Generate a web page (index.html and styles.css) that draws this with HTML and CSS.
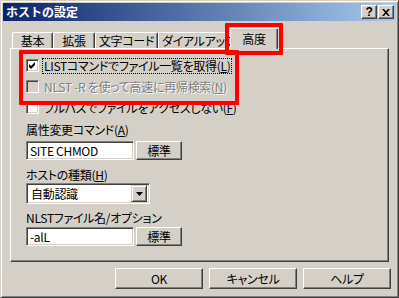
FILE: index.html
```html
<!DOCTYPE html>
<html lang="ja">
<head>
    <meta charset="UTF-8">
    <title>ホストの設定</title>
    <link rel="stylesheet" href="styles.css">
</head>
<body>
<div class="dialog">
    <div class="titlebar">
        <span class="title">ホストの設定</span>
        <div class="caption-btns">
            <span class="cap-btn help-btn">?</span>
            <span class="cap-btn">
                <svg width="8" height="7" viewBox="0 0 8 7"><path d="M0 0h2l2 2.2L6 0h2L5 3.5 8 7H6L4 4.8 2 7H0l3-3.5z" fill="#000"/></svg>
            </span>
        </div>
    </div>
    <div class="content">
        <div class="tabs">
            <div class="tab tab-basic">基本</div>
            <div class="tab tab-ext">拡張</div>
            <div class="tab tab-code">文字コード</div>
            <div class="tab tab-dial">ダイアルアップ</div>
            <div class="tab tab-adv active">高度</div>
        </div>
        <div class="panel">
            <div class="check-row">
                <span class="checkbox">
                    <svg width="11" height="11" viewBox="0 0 11 11"><polygon points="2,4 4,6 8,2 8,5 4,9 2,7" fill="#000"/></svg>
                </span>
                <span class="check-label focus">LISTコマンドでファイル一覧を取得(<u>L</u>)</span>
            </div>
            <div class="check-row">
                <span class="checkbox disabled"></span>
                <span class="check-label grayed">NLST -R を使って高速に再帰検索(<u>N</u>)</span>
            </div>
            <div class="check-row">
                <span class="checkbox"></span>
                <span class="check-label">フルパスでファイルをアクセスしない(<u>F</u>)</span>
            </div>

            <div class="field-label label-a">属性変更コマンド(<u>A</u>)</div>
            <div class="field-row">
                <div class="textbox">SITE CHMOD</div>
                <div class="button small">標準</div>
            </div>

            <div class="field-label label-h">ホストの種類(<u>H</u>)</div>
            <div class="combo">
                <span class="combo-text">自動認識</span>
                <span class="combo-btn">
                    <svg width="7" height="4" viewBox="0 0 7 4"><polygon points="0,0 7,0 3.5,4" fill="#000"/></svg>
                </span>
            </div>

            <div class="field-label label-n">NLSTファイル名/オプション</div>
            <div class="field-row row-n">
                <div class="textbox">-alL</div>
                <div class="button small">標準</div>
            </div>
        </div>
        <div class="buttons">
            <div class="button wide">OK</div>
            <div class="button wide">キャンセル</div>
            <div class="button wide">ヘルプ</div>
        </div>
    </div>

    <!-- 赤枠の注釈 -->
    <div class="mark mark-tab"></div>
    <div class="mark mark-list"></div>
</div>
</body>
</html>
```

FILE: styles.css
```css
* {
    margin: 0;
    padding: 0;
    box-sizing: border-box;
}

body {
    width: 399px;
    height: 298px;
    background: #d4d0c8;
    font-family: "Noto Sans CJK JP", "Liberation Sans", sans-serif;
    font-size: 12px;
    line-height: 14px;
    letter-spacing: -0.3px;
    font-feature-settings: "palt";
    color: #000;
    overflow: hidden;
}

.dialog {
    position: relative;
    width: 399px;
    height: 298px;
    padding: 2px;
    background: #d4d0c8;
    border: 1px solid;
    border-color: #d4d0c8 #404040 #404040 #d4d0c8;
    box-shadow: inset 1px 1px #fff, inset -1px -1px #808080;
}

.titlebar {
    height: 18px;
    display: flex;
    align-items: center;
    justify-content: space-between;
    padding-left: 3px;
    background: linear-gradient(to right, #0a246a, #a6caf0);
}

.title {
    color: #fff;
    font-weight: bold;
    font-size: 12px;
    letter-spacing: 0;
    font-feature-settings: normal;
}

.caption-btns {
    display: flex;
    gap: 1px;
    margin-right: 2px;
}

.cap-btn {
    width: 16px;
    height: 14px;
    display: flex;
    align-items: center;
    justify-content: center;
    background: #d4d0c8;
    border: 1px solid;
    border-color: #fff #404040 #404040 #fff;
    box-shadow: inset -1px -1px #808080;
}

.help-btn {
    font-family: "Liberation Sans", sans-serif;
    font-weight: bold;
    font-size: 12px;
}

.content {
    padding: 0 7px;
}

/* タブ */
.tabs {
    height: 20px;
    margin-top: 7px;
    padding-left: 2px;
    display: flex;
    align-items: flex-end;
}

.tab {
    height: 16px;
    padding-top: 1px;
    text-align: center;
    white-space: nowrap;
    background: #d4d0c8;
    border-top: 1px solid #fff;
    border-left: 1px solid #fff;
    border-right: 1px solid #404040;
    border-radius: 2px 2px 0 0;
    box-shadow: inset -1px 0 #808080;
}

.tab-basic { width: 41px; }
.tab-ext { width: 42px; }
.tab-code { width: 63px; }
.tab-dial {
    width: 74px;
    text-align: left;
    padding-left: 3px;
}

.tab.active {
    position: relative;
    z-index: 1;
    width: 48px;
    height: 21px;
    margin: 0 -2px -1px -2px;
    padding-top: 3px;
}

.panel {
    height: 214px;
    padding: 6px 0 0 15px;
    border: 1px solid;
    border-color: #fff #404040 #404040 #fff;
    box-shadow: inset -1px -1px #808080;
}

/* チェックボックス */
.check-row {
    height: 21px;
    display: flex;
    align-items: center;
}

.checkbox {
    width: 13px;
    height: 13px;
    flex: none;
    background: #fff;
    border: 1px solid;
    border-color: #808080 #fff #fff #808080;
    box-shadow: inset 1px 1px #404040, inset -1px -1px #d4d0c8;
}

.checkbox svg {
    display: block;
}

.checkbox.disabled {
    background: #d4d0c8;
}

.check-label {
    margin-left: 4px;
    padding: 0 1px;
}

.check-label.focus {
    outline: 1px dotted #000;
    outline-offset: 0;
}

.check-label.grayed {
    color: #808080;
    text-shadow: 1px 1px #fff;
}

/* 入力欄 */
.field-label {
    height: 14px;
}

.label-a { margin-top: 5px; }
.label-h { margin-top: 8px; }
.label-n { margin-top: 7px; }

.field-row {
    margin-top: 4px;
    display: flex;
    gap: 2px;
}

.row-n {
    margin-top: 2px;
}

.textbox {
    width: 108px;
    height: 19px;
    padding: 2px 0 0 3px;
    background: #fff;
    border: 1px solid;
    border-color: #808080 #fff #fff #808080;
    box-shadow: inset 1px 1px #404040, inset -1px -1px #d4d0c8;
}

.button {
    display: flex;
    align-items: center;
    justify-content: center;
    background: #d4d0c8;
    border: 1px solid;
    border-color: #fff #404040 #404040 #fff;
    box-shadow: inset -1px -1px #808080;
}

.button.small {
    width: 46px;
    height: 19px;
}

.combo {
    width: 124px;
    height: 21px;
    margin-top: 1px;
    display: flex;
    align-items: center;
    justify-content: space-between;
    padding: 2px;
    background: #fff;
    border: 1px solid;
    border-color: #808080 #fff #fff #808080;
    box-shadow: inset 1px 1px #404040, inset -1px -1px #d4d0c8;
}

.combo-text {
    padding-left: 2px;
}

.combo-btn {
    width: 16px;
    height: 17px;
    display: flex;
    align-items: center;
    justify-content: center;
    background: #d4d0c8;
    border: 1px solid;
    border-color: #d4d0c8 #404040 #404040 #d4d0c8;
    box-shadow: inset 1px 1px #fff, inset -1px -1px #808080;
}

/* 下部ボタン */
.buttons {
    margin-top: 6px;
    margin-right: -2px;
    display: flex;
    justify-content: flex-end;
    gap: 6px;
}

.button.wide {
    width: 88px;
    height: 21px;
}

/* 赤枠 */
.mark {
    position: absolute;
    border: 4px solid #ff0000;
    border-radius: 1px;
    z-index: 2;
}

.mark-tab {
    left: 224px;
    top: 22px;
    width: 58px;
    height: 32px;
}

.mark-list {
    left: 18px;
    top: 49px;
    width: 220px;
    height: 55px;
}
```
